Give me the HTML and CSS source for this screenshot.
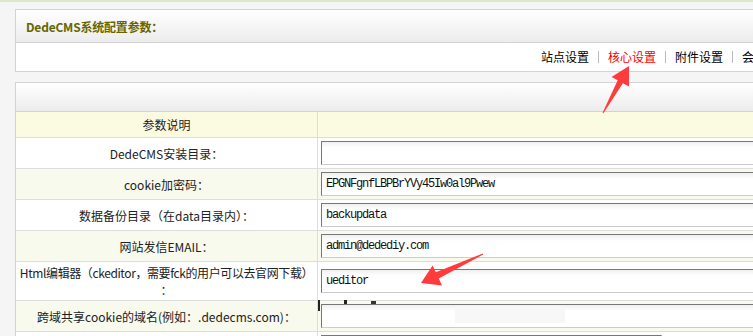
FILE: index.html
```html
<!DOCTYPE html>
<html lang="zh-CN">
<head>
    <meta charset="UTF-8">
    <title>系统基本参数</title>
    <link rel="stylesheet" href="styles.css">
</head>
<body>
    <div class="main">
        <!-- 标题和分组菜单 -->
        <div class="panel">
            <div class="panel-head">
                <b class="title">DedeCMS系统配置参数：</b>
            </div>
            <div class="tabs">
                <a href="#">站点设置</a><span class="sep"></span>
                <a href="#" class="active">核心设置</a><span class="sep"></span>
                <a href="#">附件设置</a><span class="sep"></span>
                <a href="#">会员设置</a><span class="sep"></span>
                <a href="#">互动设置</a><span class="sep"></span>
                <a href="#">性能选项</a><span class="sep"></span>
                <a href="#">其它选项</a>
            </div>
        </div>

        <!-- 参数表单 -->
        <div class="panel panel-form">
            <div class="panel-head small"></div>
            <div class="row row-head">
                <div class="label">参数说明</div>
                <div class="field"></div>
            </div>
            <div class="row">
                <div class="label">DedeCMS安装目录：</div>
                <div class="field"><input type="text" value=""></div>
            </div>
            <div class="row odd">
                <div class="label">cookie加密码：</div>
                <div class="field"><input type="text" value="EPGNFgnfLBPBrYVy45Iw0al9Pwew"></div>
            </div>
            <div class="row">
                <div class="label">数据备份目录（在data目录内）：</div>
                <div class="field"><input type="text" value="backupdata"></div>
            </div>
            <div class="row odd">
                <div class="label">网站发信EMAIL：</div>
                <div class="field"><input type="text" value="admin@dedediy.com"></div>
            </div>
            <div class="row tall">
                <div class="label"><span class="long">Html编辑器（ckeditor，需要fck的用户可以去官网下载）</span><br>：</div>
                <div class="field"><input type="text" value="ueditor"></div>
            </div>
            <div class="row odd">
                <div class="label">跨域共享cookie的域名(例如：.dedecms.com)：</div>
                <div class="field"><input type="text" value=""></div>
            </div>
            <div class="row">
                <div class="label">&nbsp;</div>
                <div class="field"><input type="text" class="short" value=""></div>
            </div>
        </div>
    </div>

    <!-- 截图上的红色箭头标注 -->
    <svg class="marks" width="753" height="336" viewBox="0 0 753 336">
        <polygon fill="#ff3b3b" points="602.6,112.8 603.4,113.2 622.9,83.2 629,86.6 629,66 611.6,76.9 617.7,80.3"/>
        <polygon fill="#ff3b3b" points="483.2,254.5 482.8,253.5 435.8,272.2 432.6,265.4 421,283 442,285.4 438.8,278.6"/>
        <rect x="455" y="306" width="110" height="17" fill="#f7f7f7"/>
        <rect x="318" y="300" width="2" height="11" fill="#222"/>
        <rect x="344" y="300" width="3" height="4" fill="#222"/>
        <rect x="371" y="301" width="5" height="3" fill="#333"/>
    </svg>
</body>
</html>
```

FILE: styles.css
```css
html {
    overflow: hidden;
}

body {
    margin: 0;
    padding: 0;
    background-color: #f5f5f5;
    border-top: 2px solid #dce8c8;
    font-family: "Noto Sans CJK SC", "Noto Sans", sans-serif;
    font-size: 12px;
    color: #222;
}

.main {
    padding: 7px 0 0 15px;
}

.panel {
    width: 1000px;
    background-color: #fff;
    border: 1px solid #d3d3d3;
}

.panel-form {
    margin-top: 10px;
}

.panel-head {
    height: 32px;
    display: flex;
    align-items: center;
    padding-left: 10px;
    background: linear-gradient(#ffffff, #ececec);
    border-bottom: 1px solid #d3d3d3;
}

.panel-head.small {
    height: 28px;
}

.title {
    color: #666600;
    font-size: 12px;
    font-weight: bold;
    letter-spacing: -0.2px;
}

.tabs {
    height: 28px;
    display: flex;
    align-items: center;
    padding-left: 525px;
}

.tabs a {
    color: #000;
    text-decoration: none;
    font-size: 12px;
    line-height: 14px;
}

.tabs a.active {
    color: #ff0000;
}

.tabs .sep {
    width: 1px;
    height: 12px;
    margin: 0 9px;
    background-color: #bbbbbb;
}

.row {
    display: grid;
    grid-template-columns: 302px 1fr;
    height: 31px;
    box-sizing: border-box;
    border-bottom: 1px solid #dddddd;
}

.row.odd {
    background-color: #f8faee;
}

.row-head {
    height: 26px;
    background-color: #fbfbe2;
}

.row.tall {
    height: 39px;
}

.label {
    display: flex;
    flex-direction: column;
    align-items: center;
    justify-content: center;
    text-align: center;
    border-right: 1px solid #dddddd;
    padding: 0 2px;
    line-height: 17px;
    color: #222;
}

.label br {
    display: none;
}

.label .long {
    white-space: nowrap;
    letter-spacing: -0.4px;
}

.field {
    display: flex;
    align-items: center;
    padding-left: 3px;
}

.field input {
    width: 500px;
    height: 24px;
    box-sizing: border-box;
    margin: 0;
    padding: 0 4px;
    border: 1px solid #cccccc;
    border-top-color: #777777;
    border-left-color: #777777;
    background: linear-gradient(#f0f0f0, #ffffff 6px);
    font-family: "Liberation Mono", monospace;
    font-size: 12px;
    letter-spacing: -1.2px;
    color: #111;
}

.field input.short {
    width: 341px;
}

.marks {
    position: absolute;
    top: 0;
    left: 0;
    pointer-events: none;
}
```
